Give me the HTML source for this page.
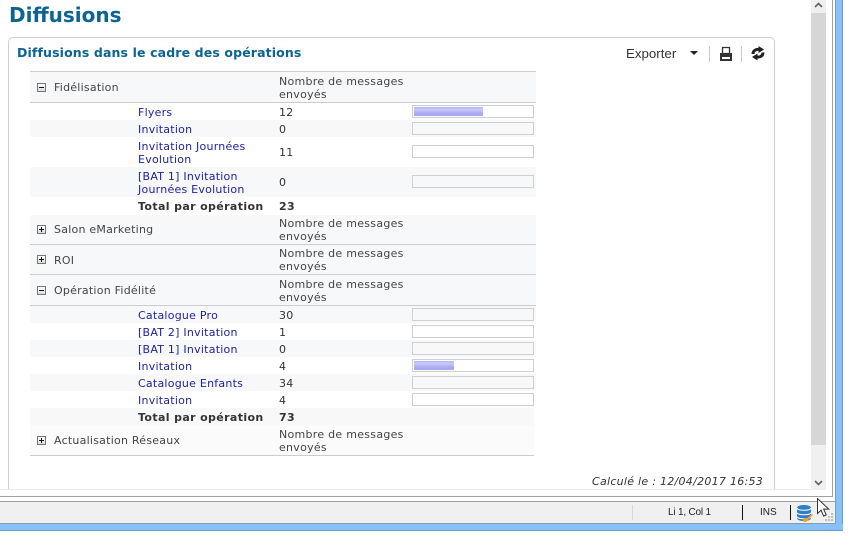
<!DOCTYPE html>
<html><head><meta charset="utf-8">
<style>
html,body{margin:0;padding:0;background:#fff;width:858px;height:547px;overflow:hidden}
*{box-sizing:border-box}
body{font-family:"DejaVu Sans","Liberation Sans",sans-serif;font-size:11px;color:#333;position:relative}
.a{position:absolute}
.r{position:absolute;left:30px;width:506px}
.g{background:#f7f8fa}
.t{position:absolute;white-space:nowrap;line-height:13px;letter-spacing:.24px}
.l{left:138px;color:#1f1f9c}
.n{left:279px;color:#333}
.h{left:54px;color:#444}
.m{left:279px;color:#444;letter-spacing:.28px}
.b{font-weight:bold;color:#333;letter-spacing:.37px}
.bar{position:absolute;left:412px;width:122px;height:13px;border:1px solid #cfcfcf}
.bar i{position:absolute;left:1px;top:1px;height:9px;background:linear-gradient(#b4b4f4 0,#c9c9fa 30%,#b0b0f4 60%,#a6a6ee 100%)}
.x{position:absolute;left:37px;width:9px;height:9px;border:1px solid #777;background:linear-gradient(#fff,#ddd)}
.x:before{content:"";position:absolute;left:1px;top:3px;width:5px;height:1px;background:#111}
.x.p:after{content:"";position:absolute;left:3px;top:1px;width:1px;height:5px;background:#111}
.hl{position:absolute;left:30px;width:506px;height:1px;background:#cdcdcd}
</style></head><body>

<!-- title -->
<div class="t" style="left:9px;top:2px;font-size:20px;line-height:26px;font-weight:bold;color:#0b6491;letter-spacing:0">Diffusions</div>

<!-- panel -->
<div class="a" style="left:8px;top:37px;width:767px;height:453px;border:1px solid #cfcfcf;border-bottom:0;border-radius:5px 5px 0 0"></div>
<div class="t" style="left:17px;top:46px;font-size:12.5px;font-weight:bold;color:#0b6491;line-height:14px;letter-spacing:.13px">Diffusions dans le cadre des opérations</div>

<!-- toolbar -->
<div class="t" style="left:626px;top:46px;font:13.3px/16px 'Liberation Sans',sans-serif;color:#333;letter-spacing:0">Exporter</div>
<div class="a" style="left:690px;top:51px;border-left:4px solid transparent;border-right:4px solid transparent;border-top:4px solid #222"></div>
<div class="a" style="left:709px;top:46px;width:1px;height:16px;background:#ccc"></div>
<div class="a" style="left:741px;top:46px;width:1px;height:16px;background:#ccc"></div>
<svg class="a" style="left:719px;top:46px" width="14" height="16" viewBox="0 0 14 16"><path d="M3.500 1.500h7v6h-7z" fill="#fff" stroke="#333" stroke-width="1.300"/><path d="M1 7h12v8H1z" fill="#333"/><path d="M3 11h8v2H3z" fill="#fff"/></svg>
<svg class="a" style="left:750px;top:46px" width="16" height="15" viewBox="0 0 16 15" fill="none" stroke="#222" stroke-width="3"><path d="M3 8C3 4.500 6 3 9.500 3.500"/><path d="M13 6.500c0 3.500-3 5-6.500 4.500"/><path d="M8.500 0L14 3.500 8.500 7z" fill="#222" stroke="none"/><path d="M7.500 7.500L2 11l5.500 3.500z" fill="#222" stroke="none"/></svg>

<!-- table backgrounds -->
<div class="r g" style="top:72px;height:30px"></div>
<div class="hl" style="top:71px"></div>
<div class="hl" style="top:102px"></div>
<div class="r g" style="top:120px;height:17px"></div>
<div class="r g" style="top:167px;height:30px"></div>
<div class="r g" style="top:215px;height:29px"></div>
<div class="hl" style="top:244px"></div>
<div class="r g" style="top:245px;height:29px"></div>
<div class="hl" style="top:274px"></div>
<div class="r g" style="top:275px;height:30px"></div>
<div class="hl" style="top:305px"></div>
<div class="r g" style="top:306px;height:17px"></div>
<div class="r g" style="top:340px;height:17px"></div>
<div class="r g" style="top:374px;height:17px"></div>
<div class="r g" style="top:408px;height:17px;width:504px"></div>
<div class="r" style="top:425px;height:30px;width:504px;background:#fbfbfb"></div>
<div class="hl" style="top:455px;width:504px"></div>

<!-- section headers -->
<div class="x" style="top:83px"></div><div class="t h" style="top:81px">Fidélisation</div>
<div class="t m" style="top:75px">Nombre de messages<br>envoyés</div>

<div class="x p" style="top:225px"></div><div class="t h" style="top:223px">Salon eMarketing</div>
<div class="t m" style="top:217px">Nombre de messages<br>envoyés</div>

<div class="x p" style="top:255px"></div><div class="t h" style="top:254px">ROI</div>
<div class="t m" style="top:247px">Nombre de messages<br>envoyés</div>

<div class="x" style="top:286px"></div><div class="t h" style="top:284px">Opération Fidélité</div>
<div class="t m" style="top:278px">Nombre de messages<br>envoyés</div>

<div class="x p" style="top:436px"></div><div class="t h" style="top:434px">Actualisation Réseaux</div>
<div class="t m" style="top:428px">Nombre de messages<br>envoyés</div>

<!-- rows group 1 -->
<div class="t l" style="top:106px">Flyers</div><div class="t n" style="top:106px">12</div>
<div class="bar" style="top:105px"><i style="width:69px"></i></div>
<div class="t l" style="top:123px">Invitation</div><div class="t n" style="top:123px">0</div>
<div class="bar g" style="top:122px"></div>
<div class="t l" style="top:140px">Invitation Journées<br>Evolution</div><div class="t n" style="top:146px">11</div>
<div class="bar" style="top:145px"></div>
<div class="t l" style="top:170px">[BAT 1] Invitation<br>Journées Evolution</div><div class="t n" style="top:176px">0</div>
<div class="bar g" style="top:175px"></div>
<div class="t b" style="left:138px;top:200px">Total par opération</div><div class="t b" style="left:279px;top:200px">23</div>

<!-- rows group 2 -->
<div class="t l" style="top:309px">Catalogue Pro</div><div class="t n" style="top:309px">30</div>
<div class="bar g" style="top:308px"></div>
<div class="t l" style="top:326px">[BAT 2] Invitation</div><div class="t n" style="top:326px">1</div>
<div class="bar" style="top:325px"></div>
<div class="t l" style="top:343px">[BAT 1] Invitation</div><div class="t n" style="top:343px">0</div>
<div class="bar g" style="top:342px"></div>
<div class="t l" style="top:360px">Invitation</div><div class="t n" style="top:360px">4</div>
<div class="bar" style="top:359px"><i style="width:40px"></i></div>
<div class="t l" style="top:377px">Catalogue Enfants</div><div class="t n" style="top:377px">34</div>
<div class="bar g" style="top:376px"></div>
<div class="t l" style="top:394px">Invitation</div><div class="t n" style="top:394px">4</div>
<div class="bar" style="top:393px"></div>
<div class="t b" style="left:138px;top:411px">Total par opération</div><div class="t b" style="left:279px;top:411px">73</div>

<!-- computed -->
<div class="t" style="left:592px;top:475px;font-style:italic;color:#333;letter-spacing:.28px">Calculé le : 12/04/2017 16:53</div>

<!-- scrollbar -->
<div class="a" style="left:811px;top:0;width:15px;height:490px;background:#f0f0f0"></div>
<div class="a" style="left:811px;top:13px;width:15px;height:432px;background:#d6d6d6"></div>
<svg class="a" style="left:814px;top:1px" width="9" height="8" viewBox="0 0 9 8" fill="none" stroke="#606060" stroke-width="1.600"><path d="M1 6l3.500-3.500L8 6"/></svg>
<svg class="a" style="left:814px;top:479px" width="9" height="8" viewBox="0 0 9 8" fill="none" stroke="#606060" stroke-width="1.600"><path d="M1 2l3.500 3.500L8 2"/></svg>

<!-- bottom lines & status bar -->
<div class="a" style="left:0;top:489px;width:811px;height:1px;background:#ececec"></div>
<div class="a" style="left:0;top:496px;width:833px;height:1px;background:#a0a0a0"></div>
<div class="a" style="left:0;top:501px;width:835px;height:22px;background:#f0f0f0;border-top:1px solid #a0a0a0"></div>
<div class="a" style="left:0;top:523px;width:835px;height:1px;background:#8c9aa8"></div>
<div class="a" style="left:832px;top:0;width:1px;height:497px;background:#a0a0a0"></div>
<div class="a" style="left:632px;top:505px;width:1px;height:15px;background:#d8d8d8"></div>
<div class="a" style="left:742px;top:505px;width:1px;height:15px;background:#111"></div>
<div class="a" style="left:790px;top:505px;width:1px;height:15px;background:#111"></div>
<div class="t" style="left:668px;top:506px;font:10px/13px 'Liberation Sans',sans-serif;color:#222;letter-spacing:-.2px">Li 1, Col 1</div>
<div class="t" style="left:760px;top:506px;font:10px/13px 'Liberation Sans',sans-serif;color:#222;letter-spacing:0">INS</div>

<!-- window border -->
<div class="a" style="left:835px;top:0;width:8px;height:531px;background:#88c0f8;border-right:1px solid #6a9cc8"></div>
<div class="a" style="left:0;top:524px;width:843px;height:7px;background:#88c0f8;border-bottom:1px solid #6a9cc8"></div>
<div class="a" style="left:835px;top:0;width:1px;height:524px;background:#6f9fd0"></div>

<!-- db icon -->
<svg class="a" style="left:797px;top:505px" width="17" height="18" viewBox="0 0 17 18">
<path d="M0 3c0-4 14-4 14 0v10c0 4-14 4-14 0z" fill="#2f7fc8"/>
<path d="M0 3c0 3 14 3 14 0M0 7.500c0 3 14 3 14 0M0 11.500c0 3 14 3 14 0" fill="none" stroke="#fff" stroke-width="1"/>
<circle cx="8" cy="15" r="2" fill="#f0a020"/><path d="M9 14l6-5 1 1-6 6z" fill="#f0a020"/>
</svg>

<!-- grip dots -->
<svg class="a" style="left:825px;top:513px" width="9" height="9" fill="#bdbdbd"><rect x="6" y="0" width="2" height="2"/><rect x="3" y="3" width="2" height="2"/><rect x="6" y="3" width="2" height="2"/><rect x="0" y="6" width="2" height="2"/><rect x="3" y="6" width="2" height="2"/><rect x="6" y="6" width="2" height="2"/></svg>

<!-- cursor -->
<svg class="a" style="left:817px;top:498px" width="14" height="20" viewBox="0 0 14 20"><path d="M.5.500v15l3.600-3.400 2.500 6 2.600-1.100-2.500-5.900h5z" fill="#fff" stroke="#333" stroke-width="1"/></svg>

</body></html>
